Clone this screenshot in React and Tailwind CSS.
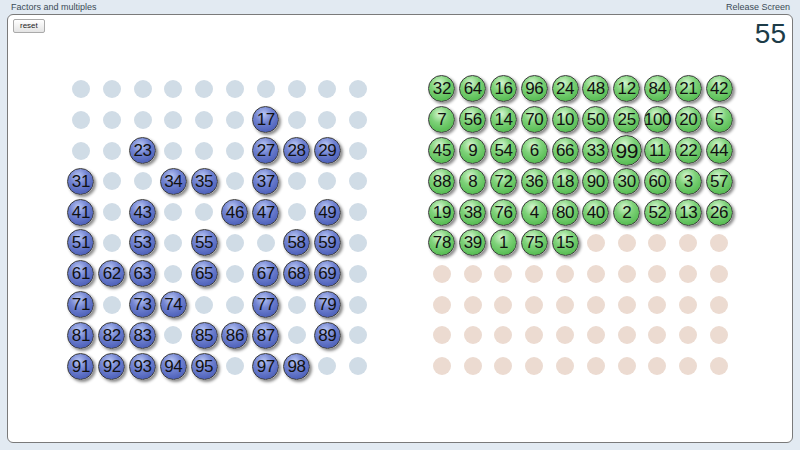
import React from "react";

const leftSet = new Set([17,23,27,28,29,31,34,35,37,41,43,46,47,49,51,53,55,58,59,61,62,63,65,67,68,69,71,73,74,77,79,81,82,83,85,86,87,89,91,92,93,94,95,97,98]);
const rightList = [32,64,16,96,24,48,12,84,21,42,7,56,14,70,10,50,25,100,20,5,45,9,54,6,66,33,99,11,22,44,88,8,72,36,18,90,30,60,3,57,19,38,76,4,80,40,2,52,13,26,78,39,1,75,15];

function Ball({ n, color, big }) {
  const blue = "bg-[radial-gradient(circle_at_42%_28%,#b9c6f3_0%,#7284d2_38%,#5366bd_72%,#3f50a3_100%)]";
  const green = "bg-[radial-gradient(circle_at_42%_28%,#d6f6d0_0%,#7fd27a_38%,#5cbf58_72%,#43a23f_100%)]";
  return (
    <div
      className={`${color === "blue" ? blue : green} ${big ? "w-[31px] h-[31px] text-[21px]" : "w-[27px] h-[27px] text-[17px]"} rounded-full border border-[#3a3a3a] shadow-[2px_2px_3px_rgba(0,0,0,0.45)] flex items-center justify-center text-[#111] leading-none tracking-[-0.4px] whitespace-nowrap`}
    >
      {n}
    </div>
  );
}

function Dot({ tone }) {
  return (
    <div className={`w-[18px] h-[18px] rounded-full ${tone === "blue" ? "bg-[#d0dce6]" : "bg-[#ecdbd1]"}`} />
  );
}

function Grid({ cells }) {
  return (
    <div className="grid grid-cols-[repeat(10,30.8px)] grid-rows-[repeat(10,30.8px)]">
      {cells.map((c, i) => (
        <div key={i} className="flex items-center justify-center">
          {c}
        </div>
      ))}
    </div>
  );
}

export default function App() {
  const leftCells = Array.from({ length: 100 }, (_, i) => {
    const n = i + 1;
    return leftSet.has(n) ? <Ball n={n} color="blue" /> : <Dot tone="blue" />;
  });
  const rightCells = Array.from({ length: 100 }, (_, i) => {
    const n = rightList[i];
    return n !== undefined ? <Ball n={n} color="green" big={n === 99} /> : <Dot tone="beige" />;
  });
  return (
    <div className="w-[800px] h-[450px] bg-[#e2eaf2] font-['Liberation_Sans',Arial,sans-serif] overflow-hidden">
      <div className="h-[14px] flex justify-between items-center pl-[11px] pr-[10px] text-[9px] text-[#3b4b56] leading-none">
        <span>Factors and multiples</span>
        <span>Release Screen</span>
      </div>
      <div className="mx-[7px] h-[429px] bg-white border border-[#7a7a7a] rounded-[6px]">
        <div className="flex justify-between items-start pt-[4px] pl-[5px] pr-[6px] h-[32px]">
          <button className="h-[14px] px-[6px] text-[8px] leading-none text-[#222] border border-[#aaa] rounded-[2px] bg-[linear-gradient(#ffffff,#e4e4e4)]">
            reset
          </button>
          <span className="text-[28px] leading-[28px] mt-[1px] text-[#1d3c48]">55</span>
        </div>
        <div className="flex justify-center gap-[53px] mt-[26.6px]">
          <Grid cells={leftCells} />
          <Grid cells={rightCells} />
        </div>
      </div>
    </div>
  );
}
